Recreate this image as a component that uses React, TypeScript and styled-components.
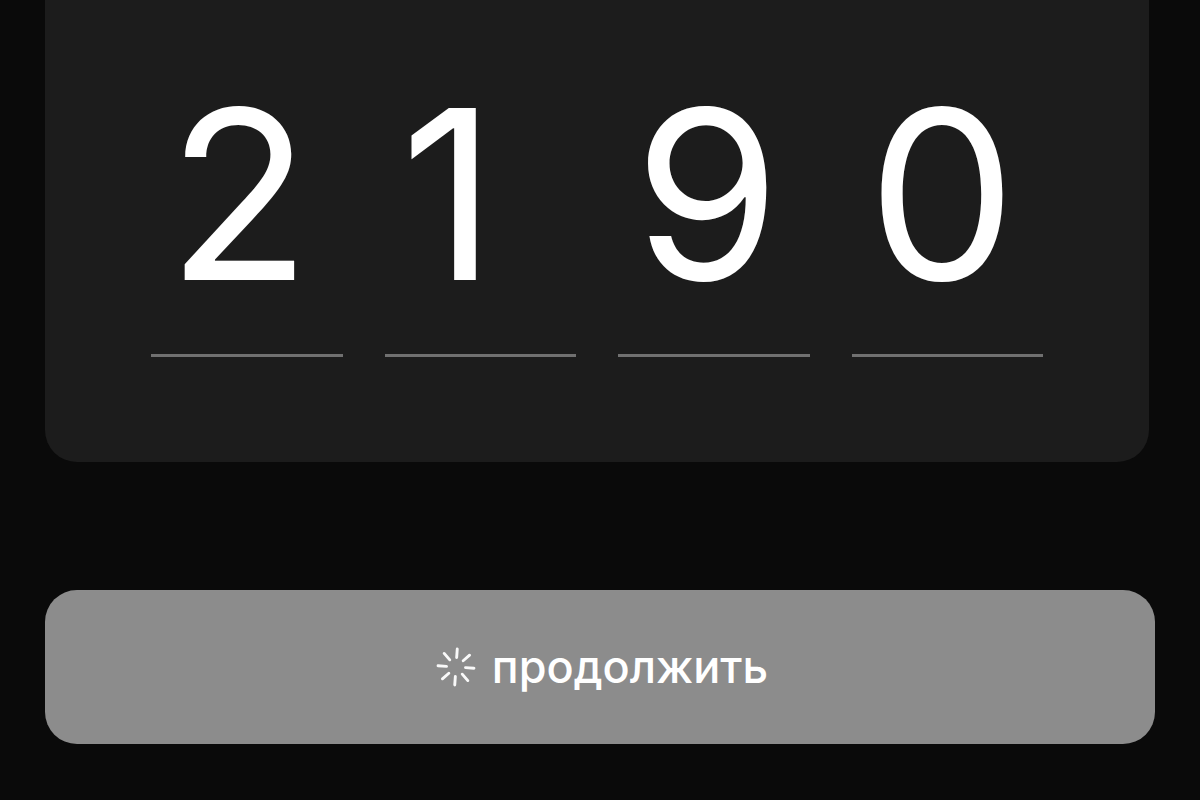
import React from "react";
import styled, { createGlobalStyle } from "styled-components";

const GlobalStyle = createGlobalStyle`
  * { box-sizing: border-box; }
  body {
    margin: 0;
    background: #0a0a0a;
    color: #fff;
    font-family: Inter, "Liberation Sans", sans-serif;
  }
`;

const Page = styled.form`
  display: flex;
  flex-direction: column;
  gap: 128px;
  padding: 0 45px 56px;
`;

const CodePanel = styled.fieldset`
  display: grid;
  grid-template-columns: repeat(4, 1fr);
  column-gap: 42px;
  min-width: 0;
  margin: 0 6px 0 0;
  padding: 33px 106px 105px;
  border: 0;
  border-radius: 0 0 32px 32px;
  background: #1c1c1c;
`;

const Digit = styled.input`
  min-width: 0;
  width: 100%;
  height: 324px;
  padding: 0 0 0 16px;
  border: 0;
  border-bottom: 3px solid #707070;
  border-radius: 0;
  outline: none;
  background: transparent;
  color: #fff;
  font-family: inherit;
  font-size: 236px;
  font-weight: 400;
  line-height: 320px;
  text-align: left;
`;

const ContinueButton = styled.button`
  display: flex;
  align-items: center;
  justify-content: center;
  gap: 16px;
  width: 100%;
  height: 154px;
  padding: 0 0 0 4px;
  border: 0;
  border-radius: 32px;
  background: #8c8c8c;
  color: #fff;
  font-family: inherit;
  font-size: 45px;
  font-weight: 500;
  line-height: 56px;
`;

const Spinner = styled.svg`
  width: 40px;
  height: 40px;
  flex: none;
`;

const code = ["2", "1", "9", "0"];
const rays = [0, 45, 90, 135, 180, 225, 270, 315];

export default function App() {
  return (
    <>
      <GlobalStyle />
      <Page onSubmit={(event) => event.preventDefault()}>
        <CodePanel aria-label="Код">
          {code.map((digit, index) => (
            <Digit
              key={index}
              aria-label={`Цифра ${index + 1}`}
              inputMode="numeric"
              maxLength={1}
              defaultValue={digit}
            />
          ))}
        </CodePanel>
        <ContinueButton type="submit">
          <Spinner viewBox="0 0 40 40" fill="none" stroke="#fff" strokeOpacity="0.95" strokeWidth="2.9" strokeLinecap="round" aria-hidden="true">
            {rays.map((angle) => (
              <path key={angle} d="M20 2v8.5" transform={`rotate(${angle + 4} 20 20)`} />
            ))}
          </Spinner>
          <span>продолжить</span>
        </ContinueButton>
      </Page>
    </>
  );
}
